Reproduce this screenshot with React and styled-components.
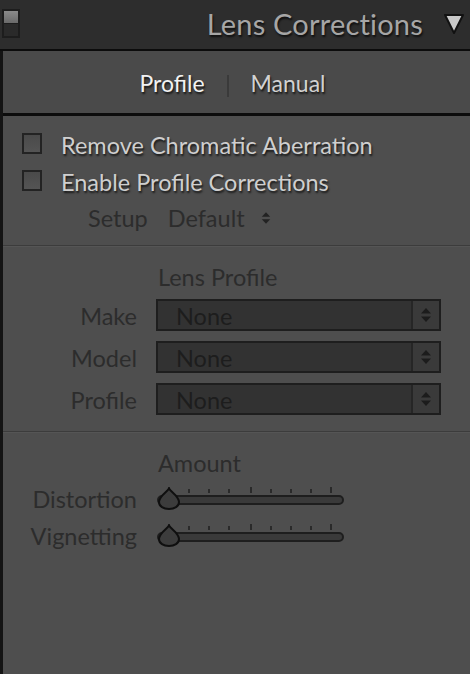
import React from "react";
import styled, { createGlobalStyle } from "styled-components";

const GlobalStyle = createGlobalStyle`
  html, body { margin: 0; padding: 0; background: #4e4e4e; }
  body { font-family: "Lato", "Open Sans", sans-serif; }
  * { box-sizing: border-box; }
`;

const Panel = styled.div`
  width: 470px;
  height: 674px;
  display: flex;
  flex-direction: column;
  background: #4e4e4e;
  overflow: hidden;
`;

const Header = styled.div`
  height: 51px;
  flex: none;
  background: #2d2d2d;
  display: flex;
  align-items: center;
  padding: 0 5px 2px 2px;
  border-bottom: 2px solid #0c0c0c;
`;

const Toggle = styled.div`
  width: 18px;
  height: 29px;
  border: 2px solid #1d1d1d;
  display: flex;
  flex-direction: column;
  background: #1d1d1d;
  gap: 1px;
`;

const ToggleTop = styled.div`
  flex: 1;
  background: linear-gradient(#8a8a8a, #6a6a6a);
`;

const ToggleBottom = styled.div`
  flex: 1;
  background: #2a2a2a;
`;

const Title = styled.div`
  margin-left: auto;
  font-size: 29px;
  line-height: 34px;
  color: #a6a6a6;
  text-shadow: 1px 2px 2px rgba(0, 0, 0, 0.7);
  letter-spacing: 0.2px;
`;

const Collapse = styled.svg`
  margin-left: 20px;
  width: 22px;
  height: 24px;
  flex: none;
`;

const Body = styled.div`
  flex: 1;
  display: flex;
  flex-direction: column;
  border-left: 3px solid #141414;
`;

const TabBar = styled.div`
  height: 65px;
  flex: none;
  background: #4a4a4a;
  border-bottom: 3px solid #0c0c0c;
  display: flex;
  align-items: center;
  justify-content: center;
  gap: 22px;
  padding-right: 8px;
`;

const Tab = styled.span`
  font-size: 23px;
  line-height: 28px;
  margin-top: 1px;
  color: ${(p) => (p.$active ? "#f2f2f2" : "#d2d2d2")};
  text-shadow: 1px 2px 2px rgba(0, 0, 0, 0.75);
`;

const TabDivider = styled.span`
  width: 2px;
  height: 22px;
  margin-top: 8px;
  background: #3a3a3a;
`;

const Content = styled.div`
  display: flex;
  flex-direction: column;
  padding-top: 9px;
`;

const CheckRow = styled.label`
  height: 37px;
  display: flex;
  align-items: center;
  padding-left: 19px;
  gap: 19px;
`;

const Checkbox = styled.span`
  width: 20px;
  height: 21px;
  border: 2px solid #232323;
  background: linear-gradient(#4a4a4a, #545454);
  flex: none;
`;

const CheckText = styled.span`
  font-size: 23.5px;
  line-height: 28px;
  color: #cfcfcf;
  text-shadow: 1px 2px 2px rgba(0, 0, 0, 0.7);
  margin-top: 2px;
`;

const SetupRow = styled.div`
  height: 37px;
  display: flex;
  align-items: center;
  padding-left: 85px;
  gap: 20px;
`;

const DarkText = styled.span`
  font-size: 23.5px;
  line-height: 28px;
  color: #2c2c2c;
`;

const UpDown = styled.svg`
  width: 10px;
  height: 16px;
  margin-left: -4px;
`;

const Separator = styled.div`
  height: 2px;
  border-top: 1px solid #3c3c3c;
  border-bottom: 1px solid #555555;
  margin: ${(p) => p.$margin};
`;

const SectionTitle = styled.div`
  font-size: 23.5px;
  color: #2c2c2c;
  padding-left: 155px;
  height: 30px;
  line-height: 30px;
`;

const FieldGrid = styled.div`
  display: grid;
  grid-template-columns: 134px 285px;
  column-gap: 19px;
  row-gap: 10px;
  align-items: center;
  margin-top: 7px;
`;

const FieldLabel = styled.span`
  font-size: 23.5px;
  line-height: 26px;
  color: #2c2c2c;
  text-align: right;
  margin-top: ${(p) => p.$shift || "2px"};
`;

const Select = styled.div`
  height: 32px;
  border: 2px solid #1e1e1e;
  background: #323232;
  display: flex;
  align-items: stretch;
`;

const SelectValue = styled.span`
  flex: 1;
  font-size: 23.5px;
  color: #1d1d1d;
  padding-left: 18px;
  line-height: 30px;
`;

const SelectArrows = styled.span`
  width: 28px;
  border-left: 2px solid #262626;
  background: #3a3a3a;
  display: flex;
  align-items: center;
  justify-content: center;
`;

const SliderGrid = styled.div`
  display: grid;
  grid-template-columns: 134px 188px;
  column-gap: 20px;
  row-gap: 11px;
  align-items: center;
  margin-top: 8px;
`;

const SliderSvg = styled.svg`
  width: 188px;
  height: 24px;
  display: block;
`;

const ArrowsIcon = ({ w = 12, h = 16 }) => (
  <svg width={w} height={h} viewBox="0 0 12 16">
    <path d="M6 1 L11 6.5 L1 6.5 Z" fill="#1c1c1c" />
    <path d="M6 15 L11 9.5 L1 9.5 Z" fill="#1c1c1c" />
  </svg>
);

const ticks = [
  { x: 12, tall: true },
  { x: 32 },
  { x: 52 },
  { x: 72 },
  { x: 94, tall: true },
  { x: 114 },
  { x: 134 },
  { x: 154 },
  { x: 174, tall: true },
];

const Slider = () => (
  <SliderSvg viewBox="0 0 188 24">
    {ticks.map((t, i) => (
      <rect key={i} x={t.x - 1} y={t.tall ? 0 : 2} width="2" height={t.tall ? 6 : 4} fill="#2a2a2a" />
    ))}
    <rect x="1" y="9" width="185" height="8" rx="4" fill="#3a3a3a" stroke="#1e1e1e" strokeWidth="2" />
    <path
      d="M12 1.5 C14 5 22 9 22 15 C22 19.5 17.5 22 12 22 C6.5 22 2 19.5 2 15 C2 9 10 5 12 1.5 Z"
      fill="#3c3c3c"
      stroke="#0f0f0f"
      strokeWidth="2"
    />
  </SliderSvg>
);

const fields = ["Make", "Model", "Profile"];

export default function App() {
  return (
    <>
      <GlobalStyle />
      <Panel>
        <Header>
          <Toggle>
            <ToggleTop />
            <ToggleBottom />
          </Toggle>
          <Title>Lens Corrections</Title>
          <Collapse viewBox="0 0 22 24">
            <path d="M2 3 L20 3 L11 21 Z" fill="#c8c8c8" stroke="#111" strokeWidth="2" strokeLinejoin="round" />
          </Collapse>
        </Header>
        <Body>
          <TabBar>
            <Tab $active>Profile</Tab>
            <TabDivider />
            <Tab>Manual</Tab>
          </TabBar>
          <Content>
            <CheckRow>
              <Checkbox />
              <CheckText>Remove Chromatic Aberration</CheckText>
            </CheckRow>
            <CheckRow>
              <Checkbox />
              <CheckText>Enable Profile Corrections</CheckText>
            </CheckRow>
            <SetupRow>
              <DarkText>Setup</DarkText>
              <DarkText>Default</DarkText>
              <UpDown viewBox="0 0 12 16">
                <path d="M6 1 L11 6.5 L1 6.5 Z" fill="#222" />
                <path d="M6 15 L11 9.5 L1 9.5 Z" fill="#222" />
              </UpDown>
            </SetupRow>
            <Separator $margin="9px 0 15px" />
            <SectionTitle>Lens Profile</SectionTitle>
            <FieldGrid>
              {fields.map((f) => (
                <React.Fragment key={f}>
                  <FieldLabel>{f}</FieldLabel>
                  <Select>
                    <SelectValue>None</SelectValue>
                    <SelectArrows>
                      <ArrowsIcon />
                    </SelectArrows>
                  </Select>
                </React.Fragment>
              ))}
            </FieldGrid>
            <Separator $margin="16px 0 15px" />
            <SectionTitle>Amount</SectionTitle>
            <SliderGrid>
              <FieldLabel $shift="0px">Distortion</FieldLabel>
              <Slider />
              <FieldLabel $shift="0px">Vignetting</FieldLabel>
              <Slider />
            </SliderGrid>
          </Content>
        </Body>
      </Panel>
    </>
  );
}
